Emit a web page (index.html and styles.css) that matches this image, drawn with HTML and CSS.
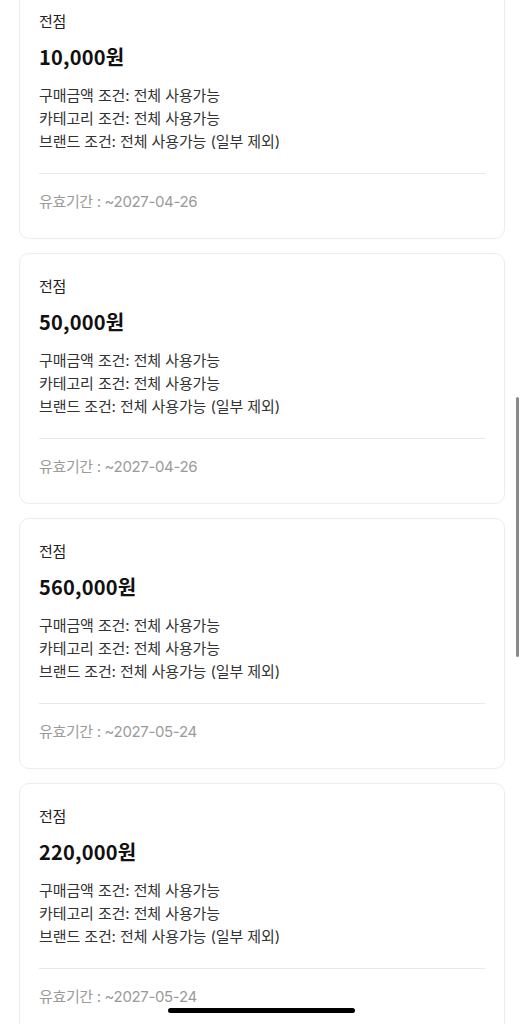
FILE: index.html
```html
<!DOCTYPE html>
<html lang="ko">

<head>
    <meta charset="UTF-8">
    <title>쿠폰</title>
    <link rel="stylesheet" href="styles.css">
</head>

<body>
    <div class="coupon-list">
        <div class="coupon">
            <div class="coupon-scope">전점</div>
            <div class="coupon-amount">10,000원</div>
            <ul class="coupon-terms">
                <li>구매금액 조건: 전체 사용가능</li>
                <li>카테고리 조건: 전체 사용가능</li>
                <li>브랜드 조건: 전체 사용가능 (일부 제외)</li>
            </ul>
            <div class="coupon-expire">유효기간 : ~2027-04-26</div>
        </div>

        <div class="coupon">
            <div class="coupon-scope">전점</div>
            <div class="coupon-amount">50,000원</div>
            <ul class="coupon-terms">
                <li>구매금액 조건: 전체 사용가능</li>
                <li>카테고리 조건: 전체 사용가능</li>
                <li>브랜드 조건: 전체 사용가능 (일부 제외)</li>
            </ul>
            <div class="coupon-expire">유효기간 : ~2027-04-26</div>
        </div>

        <div class="coupon">
            <div class="coupon-scope">전점</div>
            <div class="coupon-amount">560,000원</div>
            <ul class="coupon-terms">
                <li>구매금액 조건: 전체 사용가능</li>
                <li>카테고리 조건: 전체 사용가능</li>
                <li>브랜드 조건: 전체 사용가능 (일부 제외)</li>
            </ul>
            <div class="coupon-expire">유효기간 : ~2027-05-24</div>
        </div>

        <div class="coupon">
            <div class="coupon-scope">전점</div>
            <div class="coupon-amount">220,000원</div>
            <ul class="coupon-terms">
                <li>구매금액 조건: 전체 사용가능</li>
                <li>카테고리 조건: 전체 사용가능</li>
                <li>브랜드 조건: 전체 사용가능 (일부 제외)</li>
            </ul>
            <div class="coupon-expire">유효기간 : ~2027-05-24</div>
        </div>
    </div>

    <div class="scroll-thumb"></div>
    <div class="home-indicator"></div>
</body>
</html>
```

FILE: styles.css
```css
body {
    margin: 0;
    height: 1024px;
    overflow: hidden;
    background-color: #fff;
    font-family: Inter, "Noto Sans CJK KR", sans-serif;
    color: #222;
}

.coupon-list {
    display: flex;
    flex-direction: column;
    gap: 14px;
    padding: 0 19px;
    margin-top: -12px;
}

.coupon {
    height: 251px;
    box-sizing: border-box;
    padding: 21px 19px 0;
    border: 1px solid #ececec;
    border-radius: 10px;
}

.coupon-scope {
    font-size: 15px;
    line-height: 23px;
    letter-spacing: -0.2px;
    color: #222;
}

.coupon-amount {
    margin-top: 10px;
    font-family: "Noto Sans CJK KR", sans-serif;
    font-size: 20px;
    line-height: 28px;
    font-weight: 700;
    letter-spacing: 0.2px;
    color: #111;
}

.coupon-terms {
    list-style: none;
    margin: 13px 0 0;
    padding: 0 0 20px;
    border-bottom: 1px solid #e8e8e8;
    font-size: 15px;
    line-height: 23px;
    letter-spacing: -0.1px;
    color: #333;
}

.coupon-expire {
    margin-top: 17px;
    font-size: 15px;
    line-height: 22px;
    letter-spacing: -0.35px;
    color: #9a9a9a;
}

.scroll-thumb {
    position: absolute;
    top: 397px;
    left: 516px;
    width: 3px;
    height: 260px;
    border-radius: 2px;
    background-color: #8a8a8a;
}

.home-indicator {
    position: absolute;
    top: 1008px;
    left: 168px;
    width: 187px;
    height: 5px;
    border-radius: 3px;
    background-color: #000;
}
```
